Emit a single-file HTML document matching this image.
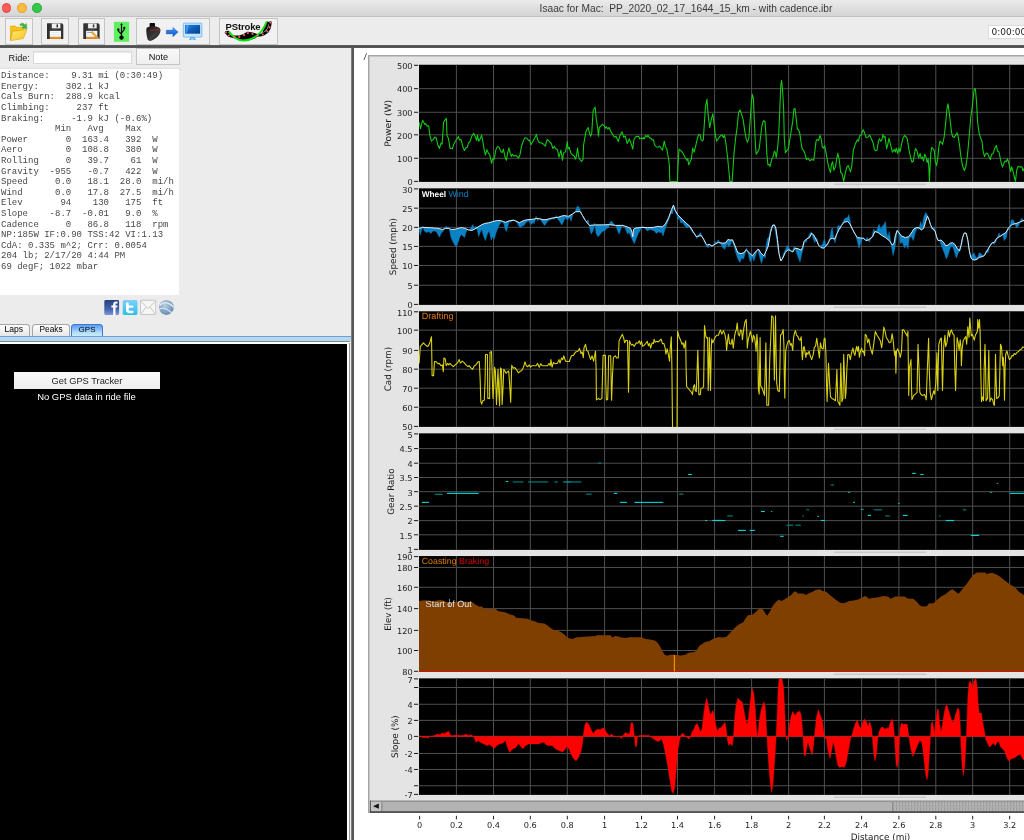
<!DOCTYPE html>
<html><head><meta charset="utf-8"><title>Isaac for Mac</title>
<style>
html,body{margin:0;padding:0;}
body{width:1024px;height:840px;overflow:hidden;position:relative;background:#ececec;font-family:"Liberation Sans",sans-serif;color:#111;}
.abs{position:absolute;}
#titlebar{left:0;top:0;width:1024px;height:16px;background:linear-gradient(#ebebeb,#d4d4d4);border-bottom:1px solid #c2c2c2;}
#title{left:536px;top:1.5px;width:300px;text-align:center;font-size:10.2px;line-height:13px;color:#3a3a3a;white-space:pre;}
.tl{width:9.4px;height:9.4px;border-radius:50%;top:3.4px;}
#toolbar{left:0;top:17px;width:1024px;height:28px;background:#ececec;}
.tb{background:#f1f1f1;border:1px solid #c4c4c4;box-sizing:border-box;top:18px;height:27px;}
#darkline{left:0;top:45px;width:1024px;height:3px;background:linear-gradient(#6a6a6a,#4c4c4c 40%,#5a5a5a);}
#left{left:0;top:48px;width:352px;height:792px;background:#ececec;}
#vdiv{left:351.3px;top:48px;width:3.3px;height:792px;background:linear-gradient(90deg,#9a9a9a,#565656 30%,#565656 70%,#9a9a9a);}
#right{left:354px;top:48px;width:670px;height:792px;background:#fff;}
#panel{left:368px;top:55.3px;width:656px;height:757.6px;background:#e4e4e4;box-sizing:border-box;box-shadow:inset 1px 1px 0 #a4a4a4, inset 2px 2px 0 #c6c6c6;}
.chart{position:absolute;left:0;top:0;text-rendering:geometricPrecision;}
.tk{font-family:"DejaVu Sans","Liberation Sans",sans-serif;font-size:8.2px;fill:#222;}
.at{font-family:"DejaVu Sans","Liberation Sans",sans-serif;font-size:8.9px;fill:#1a1a1a;}
.lg{font-family:"Liberation Sans",sans-serif;font-size:8.3px;font-weight:bold;}
#stats{left:0;top:69px;width:178.5px;height:226px;background:#fff;}
#stats pre{margin:0;position:absolute;left:1px;top:2.3px;font-family:"Liberation Mono",monospace;font-size:9px;line-height:10.59px;color:#484848;}
.lbl{font-size:9.2px;white-space:pre;}
</style></head>
<body>
<div id="wrap" style="position:absolute;left:0;top:0;width:1024px;height:840px;will-change:transform;">
<div id="titlebar" class="abs"></div>
<div class="abs tl" style="left:2px;background:#fc5b57;border:0.5px solid #e0443e;box-sizing:border-box"></div>
<div class="abs tl" style="left:17.2px;background:#fdbc40;border:0.5px solid #dea123;box-sizing:border-box"></div>
<div class="abs tl" style="left:32.3px;background:#34c84a;border:0.5px solid #1dad2b;box-sizing:border-box"></div>
<div id="title" class="abs">Isaac for Mac:  PP_2020_02_17_1644_15_km - with cadence.ibr</div>
<div id="toolbar" class="abs"></div>
<div class="abs tb" style="left:5.2px;width:27.4px;"></div>
<div class="abs tb" style="left:41.3px;width:27.4px;"></div>
<div class="abs tb" style="left:78.3px;width:26.5px;"></div>
<div class="abs tb" style="left:136.3px;width:73.5px;"></div>
<div class="abs tb" style="left:219.4px;width:58.3px;"></div>
<div class="abs" style="left:987.7px;top:24.8px;width:40px;height:14px;background:#fff;border:1px solid #dcdcdc;box-sizing:border-box;"></div>
<div class="abs" style="left:991.6px;top:26px;font-size:10px;line-height:12px;color:#222;white-space:pre;font-family:'DejaVu Sans','Liberation Sans',sans-serif;font-size:9px;">0:00:00</div>
<svg class="abs" style="left:0;top:16px" width="290" height="30" viewBox="0 16 290 30">
<defs>
<linearGradient id="fold" x1="0" y1="0" x2="1" y2="1"><stop offset="0" stop-color="#fdea80"/><stop offset="1" stop-color="#f8c414"/></linearGradient>
<linearGradient id="flp" x1="0" y1="0" x2="1" y2="0"><stop offset="0" stop-color="#2c2c2c"/><stop offset="0.5" stop-color="#4a4a4a"/><stop offset="1" stop-color="#2c2c2c"/></linearGradient>
<linearGradient id="scr" x1="0" y1="0" x2="1" y2="1"><stop offset="0" stop-color="#2a86e0"/><stop offset="0.5" stop-color="#0f5cb8"/><stop offset="1" stop-color="#0a3f8c"/></linearGradient>
<linearGradient id="arr" x1="0" y1="0" x2="0" y2="1"><stop offset="0" stop-color="#4a98f0"/><stop offset="1" stop-color="#0c50c8"/></linearGradient>
<linearGradient id="dev" x1="0" y1="0" x2="1" y2="1"><stop offset="0" stop-color="#1a1a1a"/><stop offset="0.6" stop-color="#3a3a3a"/><stop offset="1" stop-color="#141414"/></linearGradient>
</defs>
<!-- folder -->
<path d="M10.4 26.6q0-0.6 0.6-0.6h4.6l1 1.2h6.6q0.7 0 0.7 0.7v2.5l-11.6 0.9l-1.9 8.7z" fill="#f9c414" stroke="#d89808" stroke-width="0.5"/>
<path d="M12.8 31.3l14.1-1.7l-3.6 9l-12.7 2z" fill="url(#fold)" stroke="#dc9a0c" stroke-width="0.6"/>
<path d="M19.8 24.4c1.6-1.8 4-1.6 5 0.3l1.6-1.3l0.6 5.4l-5.3-0.9l1.5-1.3c-0.8-1.2-2-1.2-2.6-0.6z" fill="#3fb53f" stroke="#2a962a" stroke-width="0.3"/>
<!-- floppy 1 -->
<g id="fl">
<path d="M47.6 23.3h14.3l1.4 1.4v14.4h-16.3v-15.2q0-0.6 0.6-0.6z" fill="url(#flp)"/>
<rect x="51.8" y="23.5" width="8.6" height="4.8" fill="#f0f0f0"/>
<rect x="56.5" y="24.4" width="1.5" height="3" fill="#333"/>
<rect x="49.8" y="30.9" width="11.2" height="6" fill="#fafafa"/>
<path d="M50.6 32.7h9.6M50.6 34.8h9.6" stroke="#c8d4e8" stroke-width="0.5"/>
<rect x="49.8" y="36.9" width="11.2" height="2" fill="#f0921a"/>
</g>
<!-- floppy 2 -->
<g transform="translate(36.3 0)">
<path d="M47.6 23.3h14.3l1.4 1.4v14.4h-16.3v-15.2q0-0.6 0.6-0.6z" fill="url(#flp)"/>
<rect x="51.8" y="23.5" width="8.6" height="4.8" fill="#f0f0f0"/>
<rect x="56.5" y="24.4" width="1.5" height="3" fill="#333"/>
<rect x="49.8" y="30.9" width="11.2" height="6" fill="#fafafa"/>
<path d="M50.8 32.4h6" stroke="#5078c8" stroke-width="0.7"/><path d="M50.6 34.8h5" stroke="#c8d4e8" stroke-width="0.5"/>
<rect x="49.8" y="36.9" width="11.2" height="2" fill="#f0921a"/>
<path d="M54.6 32.4l1.3-1.1l6 6l-1.2 1.2z" fill="#f2a62a" stroke="#c07810" stroke-width="0.3"/>
<path d="M60.7 38.5l1.2-1.2l0.7 1.9z" fill="#f6d8b0"/>
</g>
<!-- usb -->
<rect x="113.9" y="21.8" width="15.2" height="20" fill="#5ef05e"/>
<g stroke="#000" fill="none" stroke-width="1.2">
<path d="M121.5 24.5V36"/>
<path d="M118.3 30.2c0 2.6 3.2 2.4 3.2 4.6"/>
<path d="M124.3 28.6c0 2.8-2.8 2.6-2.8 5"/>
</g>
<path d="M121.5 22.9l1.2 2.2h-2.4z" fill="#000"/>
<circle cx="121.5" cy="37.6" r="2.2" fill="#000"/>
<rect x="117.2" y="28.6" width="2.2" height="2" fill="#000"/>
<circle cx="124.3" cy="27.9" r="1.15" fill="#000"/>
<!-- device -->
<rect x="149.6" y="22.9" width="5.4" height="4.4" rx="0.8" fill="#0c0c0c"/>
<path d="M147.6 27.2c3-1.2 8-1.2 11.6 0.6c1.4 0.7 1.5 2.6 1 4.4c-0.8 3-4 6.6-9.2 8.6c-1.6 0.5-3.2-0.4-3.6-2c-0.9-3.6-1.3-7.6-1-10.2c0.1-0.8 0.5-1.1 1.2-1.4z" fill="url(#dev)"/>
<path d="M150 30.7q4.6-1.3 9.2-1.2" stroke="#c01828" stroke-width="0.9" fill="none"/>
<path d="M150.5 38.6l4.5-4.4" stroke="#555" stroke-width="0.4"/>
<!-- arrow -->
<path d="M166.2 30h6.6v-2.8l5.5 4.9l-5.5 5v-3h-6.6z" fill="url(#arr)" stroke="#2a6cd8" stroke-width="0.3"/>
<!-- monitor -->
<rect x="183.3" y="23.1" width="18.6" height="14" rx="0.7" fill="#c4e6ff" stroke="#58aaf0" stroke-width="0.7"/>
<rect x="185" y="24.9" width="15.1" height="8.8" fill="url(#scr)"/>
<path d="M186.3 25.2h2.6l-2 8.2h-1.6z" fill="#5aa8f0" opacity="0.7"/>
<path d="M190.6 37.1h3.6l1.8 2.8h-7z" fill="#58aaf0"/>
<path d="M191.2 38.6h2.4l0.6 1h-3.6z" fill="#d8f0ff"/>
<!-- pstroke -->
<path d="M226.1 32.4L228.8 35.5L234.3 36.9L239.3 36.9L244 35.1L247.9 33L252.5 33.8L257.7 35.5L262.8 34.6L267.5 31.6L269.7 27.3L270.4 22.6" fill="none" stroke="#000" stroke-width="2.6" stroke-linejoin="round" stroke-linecap="round"/>
<path d="M228.2 30.6L226 31.4L229 34.5L231 33.5z" fill="#000"/>
<path d="M236 37.5L239.3 36.9L244 35.1L247.9 33L252.5 33.8L257.7 35.5L256 38L250 40L243.3 40.8L238 39.8z" fill="#000"/>
<path d="M262 34L267 29L269.5 22L267 21.5L264 28z" fill="#000"/>
<path d="M228.800 31.600C233 37 238 40.600 243.300 40.600C252 40.600 262.500 34 266.700 21.500" fill="none" stroke="#0be20b" stroke-width="2"/>
<g fill="#ff5a68">
<circle cx="226.100" cy="32.400" r="1.000"/><circle cx="228.800" cy="35.500" r="1.050"/><circle cx="234.300" cy="36.900" r="1.100"/><circle cx="239.300" cy="36.900" r="1.100"/><circle cx="244.000" cy="35.100" r="1.100"/><circle cx="247.900" cy="33.000" r="1.100"/><circle cx="252.500" cy="33.800" r="1.100"/><circle cx="257.700" cy="35.500" r="1.100"/><circle cx="262.800" cy="34.600" r="1.100"/><circle cx="267.500" cy="31.600" r="1.100"/><circle cx="269.700" cy="27.300" r="1.100"/><circle cx="270.400" cy="22.600" r="1.100"/>
</g>

</svg>

<div class="abs" style="left:225.6px;top:20.6px;font-size:9.5px;line-height:11px;font-weight:bold;color:#111;white-space:pre;letter-spacing:-0.15px;">PStroke</div>

<div id="darkline" class="abs"></div>
<div id="left" class="abs"></div>
<div id="vdiv" class="abs"></div>
<div id="right" class="abs"></div>
<div id="panel" class="abs"></div>
<div class="abs lbl" style="left:8.6px;top:51.7px;line-height:12px;font-size:9.1px;">Ride:</div>
<div class="abs" style="left:32.5px;top:50.5px;width:99.5px;height:13px;background:#fff;border:1px solid #dadada;box-sizing:border-box;box-shadow:inset 0 1px 1px #e8e8e8;"></div>
<div class="abs" style="left:136.3px;top:48.4px;width:44.2px;height:16.6px;background:linear-gradient(#f8f8f8,#efefef);border:1px solid #c6c6c6;box-sizing:border-box;text-align:center;font-size:9.2px;line-height:16px;">Note</div>
<div class="abs" style="left:0;top:66.5px;width:181px;height:3px;background:linear-gradient(#ececec,#dcdcdc);"></div>
<div id="stats" class="abs"><pre>Distance:    9.31 mi (0:30:49)
Energy:     302.1 kJ
Cals Burn:  288.9 kcal
Climbing:     237 ft
Braking:     -1.9 kJ (-0.6%)
          Min   Avg    Max
Power       0  163.4   392  W
Aero        0  108.8   380  W
Rolling     0   39.7    61  W
Gravity  -955   -0.7   422  W
Speed     0.0   18.1  28.0  mi/h
Wind      0.0   17.8  27.5  mi/h
Elev       94    130   175  ft
Slope    -8.7  -0.01   9.0  %
Cadence     0   86.8   118  rpm
NP:185W IF:0.90 TSS:42 VI:1.13
CdA: 0.335 m^2; Crr: 0.0054
204 lb; 2/17/20 4:44 PM
69 degF; 1022 mbar</pre></div>
<!-- social icons -->
<svg class="abs" style="left:100px;top:296px" width="80" height="24" viewBox="0 0 80 24">
<defs>
<linearGradient id="fbg" x1="0" y1="0" x2="0" y2="1"><stop offset="0" stop-color="#27437f"/><stop offset="0.6" stop-color="#4562a8"/><stop offset="1" stop-color="#7a98e0"/></linearGradient>
<linearGradient id="twg" x1="0" y1="0" x2="0" y2="1"><stop offset="0" stop-color="#7fd0fb"/><stop offset="1" stop-color="#2bbfe6"/></linearGradient>
<radialGradient id="glg" cx="0.4" cy="0.35" r="0.7"><stop offset="0" stop-color="#b9cfe2"/><stop offset="1" stop-color="#5f88b0"/></radialGradient>
</defs>
<rect x="4.3" y="4.1" width="14.8" height="14.8" rx="1.3" fill="url(#fbg)"/>
<path d="M13.2 18.9V11.6H11.4V9.6H13.2V8.3C13.2 6.3 14.3 5.4 16 5.4C16.7 5.4 17.3 5.5 17.5 5.5V7.4H16.5C15.7 7.4 15.5 7.8 15.5 8.4V9.6H17.4L17.1 11.6H15.5V18.9Z" fill="#fff"/>
<rect x="22.7" y="4.1" width="14.8" height="14.8" rx="1.6" fill="url(#twg)"/>
<path d="M27.2 6.6c0.9 0 1.5 0.5 1.5 1.4V9.4H32.3c0.8 0 1.3 0.5 1.3 1.2s-0.5 1.2-1.3 1.2H28.7v1.6c0 1 0.5 1.4 1.5 1.4h2.1c0.8 0 1.3 0.5 1.3 1.2s-0.5 1.2-1.3 1.2H29.6c-2.3 0-3.6-1.2-3.6-3.5V8c0-0.9 0.5-1.4 1.2-1.4z" fill="#fff"/>
<rect x="40.5" y="4.3" width="15.2" height="14.2" rx="0.8" fill="#f6f6f6" stroke="#b4b4b4" stroke-width="0.7"/>
<path d="M40.8 5.2L48.1 12.6L55.4 5.2M40.8 18L46.3 11M55.4 18L49.9 11" fill="none" stroke="#b0b0b0" stroke-width="0.7"/>
<circle cx="66.4" cy="11.6" r="7.4" fill="url(#glg)"/>
<path d="M59.6 9.5C62 6.6 66 5.6 70.5 8.4C72 9.3 73 10.5 73.6 11.4" fill="none" stroke="#e6eef6" stroke-width="1.3"/>
<path d="M59.2 13.2C62.5 11.5 66.5 12.5 69.5 15.2C70.5 16 71.3 16.5 72.2 16.3" fill="none" stroke="#dbe7f2" stroke-width="1.1"/>
</svg>
<!-- tabs -->
<div class="abs" style="left:-4px;top:324.3px;width:34.2px;height:12.2px;background:linear-gradient(#fdfdfd,#f2f2f2 50%,#e6e6e6);border:1px solid #a6a6a6;border-bottom:none;border-radius:3.5px 3.5px 0 0;box-sizing:border-box;"></div>
<div class="abs" style="left:31.6px;top:324.3px;width:38.6px;height:12.2px;background:linear-gradient(#fdfdfd,#f2f2f2 50%,#e6e6e6);border:1px solid #a6a6a6;border-bottom:none;border-radius:3.5px 3.5px 0 0;box-sizing:border-box;"></div>
<div class="abs" style="left:70.8px;top:324.3px;width:31.8px;height:12.2px;background:linear-gradient(#5c9ff0,#8ec4f8 45%,#b5defc 70%,#c8ecff);border:1px solid #3d7ad6;border-bottom:none;border-radius:3.5px 3.5px 0 0;box-sizing:border-box;"></div>
<div class="abs lbl" style="left:4.4px;top:324.2px;font-size:8.6px;line-height:11px;color:#000;">Laps</div>
<div class="abs lbl" style="left:39.5px;top:324.2px;font-size:8.3px;line-height:11px;color:#000;">Peaks</div>
<div class="abs lbl" style="left:78.6px;top:324.2px;font-size:8px;line-height:11px;color:#000;">GPS</div>
<!-- blue strip -->
<div class="abs" style="left:0;top:336px;width:351.3px;height:5.2px;background:linear-gradient(#6c9fd2 0,#6c9fd2 18%,#bcd6f0 28%,#bcd6f0 68%,#a5dcfc 80%,#a5dcfc 100%);"></div>
<div class="abs" style="left:0;top:341.2px;width:350px;height:1px;background:#8a8a8a;"></div>
<div class="abs" style="left:0;top:342.2px;width:349.5px;height:498px;background:#fff;"></div>
<div class="abs" style="left:349.3px;top:343px;width:0.8px;height:497px;background:#9a9a9a;"></div>
<div class="abs" style="left:0;top:344.3px;width:346.8px;height:496px;background:#000;"></div>
<div class="abs" style="left:14.4px;top:372px;width:145.2px;height:17px;background:linear-gradient(#f9f9f9,#eeeeee);text-align:center;font-size:9.3px;line-height:19.4px;color:#222;">Get GPS Tracker</div>
<div class="abs lbl" style="left:0;top:390.6px;width:173px;text-align:center;color:#fff;font-size:9.45px;line-height:12px;">No GPS data in ride file</div>

<div class="abs" style="left:363.9px;top:51.6px;font-size:9.2px;line-height:10px;color:#2a2a2a;transform:skewX(-8deg);">/</div>
<svg class="chart" width="1024" height="840" viewBox="0 0 1024 840">
<defs>
<clipPath id="c0"><rect x="419.00" y="64.75" width="605.00" height="117.15"/></clipPath>
<clipPath id="c1"><rect x="419.00" y="188.35" width="605.00" height="116.55"/></clipPath>
<clipPath id="c2"><rect x="419.00" y="311.27" width="605.00" height="115.63"/></clipPath>
<clipPath id="c3"><rect x="419.00" y="433.35" width="605.00" height="116.55"/></clipPath>
<clipPath id="c4"><rect x="419.00" y="556.05" width="605.00" height="115.85"/></clipPath>
<clipPath id="c5"><rect x="419.00" y="678.35" width="605.00" height="116.55"/></clipPath>
</defs>
<rect x="419.00" y="64.75" width="605.00" height="117.15" fill="#000"/>
<rect x="419.00" y="188.35" width="605.00" height="116.55" fill="#000"/>
<rect x="419.00" y="311.27" width="605.00" height="115.63" fill="#000"/>
<rect x="419.00" y="433.35" width="605.00" height="116.55" fill="#000"/>
<rect x="419.00" y="556.05" width="605.00" height="115.85" fill="#000"/>
<rect x="419.00" y="678.35" width="605.00" height="116.55" fill="#000"/>
<path d="M419.0 88.66H1024M419.0 112.27H1024M419.0 134.82H1024M419.0 158.28H1024M456.40 64.75V181.90M493.50 64.75V181.90M530.30 64.75V181.90M567.30 64.75V181.90M604.60 64.75V181.90M641.50 64.75V181.90M677.50 64.75V181.90M714.60 64.75V181.90M751.60 64.75V181.90M788.60 64.75V181.90M824.40 64.75V181.90M861.60 64.75V181.90M898.90 64.75V181.90M935.80 64.75V181.90M972.70 64.75V181.90M1009.70 64.75V181.90" stroke="#4f4f4f" stroke-width="1" fill="none"/>
<path clip-path="url(#c0)" d="M419.1 122.2 L420.5 128.6 L422.6 120.3 L424.9 124.5 L425.7 123.7 L427.2 126.3 L428.7 125.7 L429.8 135.1 L431.5 141.2 L433.3 139.4 L434.5 137.4 L436.0 137.4 L437.9 145.0 L439.4 148.5 L441.2 142.7 L442.1 144.3 L443.6 122.2 L445.2 119.9 L446.4 118.4 L447.0 135.1 L448.5 138.9 L450.0 148.1 L452.3 148.8 L453.8 144.3 L455.8 140.5 L458.4 136.6 L459.5 140.0 L461.0 139.4 L463.0 147.3 L464.5 150.4 L466.0 147.6 L467.3 147.3 L468.6 142.4 L469.8 142.0 L471.7 136.3 L473.7 133.3 L475.2 136.6 L476.7 140.5 L477.5 135.1 L478.7 141.2 L480.2 138.9 L481.6 135.1 L482.8 141.2 L484.3 150.4 L485.4 154.9 L486.9 149.6 L488.4 153.4 L489.6 154.2 L491.6 163.3 L492.7 158.7 L494.2 159.2 L495.7 150.4 L497.3 146.6 L499.1 147.3 L501.1 151.9 L502.1 152.6 L503.4 149.1 L504.9 156.5 L506.4 160.3 L507.9 151.9 L509.0 147.8 L510.2 153.4 L511.3 156.5 L512.2 154.2 L514.0 156.1 L515.5 155.2 L517.1 156.5 L518.6 158.0 L520.1 154.2 L521.6 145.8 L523.5 140.5 L525.0 137.7 L527.0 138.2 L528.5 140.5 L529.6 140.2 L531.1 144.6 L532.3 142.4 L534.6 138.2 L536.4 134.4 L537.6 139.7 L539.2 142.4 L541.4 143.0 L543.7 144.3 L545.3 146.2 L547.2 139.4 L549.1 141.2 L551.3 143.5 L552.9 148.5 L554.4 146.2 L555.9 149.1 L557.4 149.6 L559.0 157.2 L560.9 150.1 L562.5 160.3 L563.5 153.1 L565.5 151.9 L567.3 141.5 L568.0 148.8 L569.3 147.3 L570.8 153.1 L572.6 154.9 L574.1 155.7 L575.4 159.2 L576.4 156.1 L577.5 148.1 L579.0 158.0 L581.5 161.3 L583.0 159.5 L583.6 145.0 L584.8 138.2 L586.0 131.3 L588.2 127.5 L589.4 132.8 L590.6 136.3 L591.7 133.6 L593.2 110.0 L595.2 107.2 L596.2 118.4 L597.8 129.0 L598.5 136.3 L599.3 127.5 L600.8 126.3 L602.3 124.2 L604.3 126.0 L605.4 128.3 L606.4 126.7 L607.7 129.0 L609.2 127.5 L610.7 131.3 L612.2 133.6 L614.1 137.0 L616.0 136.6 L618.3 141.5 L620.1 135.1 L622.1 131.8 L623.7 137.4 L625.2 135.9 L627.2 143.5 L629.3 138.9 L630.8 142.7 L632.8 149.1 L633.9 139.7 L635.4 137.0 L637.4 136.3 L638.9 136.6 L639.6 138.9 L641.2 137.9 L642.4 138.9 L643.5 137.4 L644.2 138.9 L645.7 135.4 L647.0 137.0 L648.0 135.4 L649.6 137.9 L651.1 138.2 L652.1 140.0 L653.4 139.7 L654.6 145.0 L656.4 147.0 L658.2 147.0 L659.8 146.2 L661.3 148.5 L662.5 150.1 L664.3 141.2 L665.5 147.0 L666.8 148.8 L667.8 154.9 L668.6 158.7 L669.4 165.6 L669.8 181.3 L671.6 181.6 L677.4 181.6 L678.0 165.6 L679.0 149.1 L680.8 150.7 L682.6 152.6 L684.6 156.5 L686.1 159.2 L686.9 160.3 L687.8 158.7 L688.7 164.8 L689.9 162.2 L691.4 158.7 L692.7 148.1 L694.2 152.2 L695.7 145.8 L697.5 138.2 L698.8 134.4 L700.3 135.1 L701.0 139.7 L702.4 140.9 L703.3 139.7 L704.4 122.9 L705.5 106.2 L707.0 99.3 L708.2 115.3 L709.7 127.8 L711.2 119.9 L712.8 113.8 L714.0 122.9 L715.1 133.6 L716.6 141.2 L719.6 136.6 L721.9 134.8 L723.4 137.4 L724.6 135.1 L726.0 144.3 L727.5 156.5 L729.0 171.7 L729.9 181.6 L732.1 181.6 L733.0 168.6 L734.0 153.4 L735.6 138.2 L737.1 127.5 L738.6 112.3 L740.1 110.0 L741.7 114.6 L743.2 119.9 L744.7 130.6 L746.2 138.9 L747.4 142.4 L748.8 138.2 L750.0 122.9 L751.3 103.1 L752.3 94.3 L753.4 98.6 L754.3 119.9 L755.4 144.3 L756.1 154.2 L757.7 151.9 L759.2 148.8 L760.4 138.2 L761.9 126.0 L763.4 120.7 L765.0 121.4 L766.0 135.1 L766.8 153.4 L767.9 164.8 L769.1 164.4 L770.1 166.4 L771.7 159.5 L772.9 157.2 L774.4 151.1 L775.6 153.4 L776.2 157.7 L777.5 148.8 L778.7 135.1 L779.7 112.3 L780.8 84.9 L781.6 80.6 L782.5 89.4 L783.6 107.7 L784.3 138.2 L785.4 152.6 L786.9 150.4 L788.4 148.8 L789.6 141.2 L791.2 130.6 L792.7 121.4 L793.9 109.2 L795.0 108.5 L796.0 116.8 L797.3 129.0 L798.5 129.8 L799.7 132.8 L801.1 142.7 L802.3 149.6 L803.4 150.1 L804.9 153.4 L806.4 159.5 L808.2 158.3 L809.8 160.7 L811.7 159.5 L813.7 160.3 L814.8 151.9 L816.0 141.2 L817.1 139.4 L818.6 140.5 L820.1 135.4 L821.3 139.7 L822.4 147.3 L823.5 148.1 L824.7 145.8 L826.2 153.4 L827.7 162.5 L829.3 169.4 L830.5 172.4 L831.5 164.4 L832.6 161.8 L833.8 170.2 L835.4 167.1 L836.6 159.5 L837.8 153.4 L839.2 159.5 L840.7 172.4 L842.2 174.0 L843.7 181.3 L845.3 173.2 L846.8 167.1 L848.3 165.6 L849.8 170.2 L850.6 171.7 L851.8 165.6 L853.3 150.4 L855.2 144.3 L857.4 139.7 L858.5 141.2 L859.7 135.9 L861.2 135.1 L863.1 129.8 L864.3 132.1 L866.1 137.7 L868.1 137.0 L869.6 135.1 L871.8 139.7 L873.3 143.5 L874.4 149.6 L875.6 150.7 L877.1 150.1 L878.4 141.2 L879.4 138.9 L880.9 141.2 L882.0 139.7 L882.9 134.4 L884.0 137.4 L885.1 136.6 L886.6 148.8 L887.8 144.3 L889.0 138.2 L890.5 144.3 L892.4 152.2 L894.2 149.6 L895.4 151.9 L896.2 148.1 L897.7 153.4 L898.9 148.1 L900.0 151.9 L901.5 144.3 L903.0 138.2 L904.6 135.4 L906.1 137.0 L907.3 138.9 L908.8 148.8 L910.7 158.0 L911.9 162.2 L913.4 161.0 L914.5 153.4 L915.5 148.5 L917.1 151.1 L918.6 158.0 L920.1 153.4 L921.3 158.7 L922.5 157.2 L923.6 161.0 L924.7 154.2 L925.9 156.5 L927.1 162.5 L928.2 158.7 L928.9 168.6 L929.4 181.6 L930.0 168.6 L930.8 153.4 L931.7 147.3 L933.2 149.1 L934.3 150.4 L935.3 161.0 L936.6 165.6 L937.8 158.0 L938.8 147.3 L939.9 141.2 L941.4 142.7 L942.6 144.3 L944.2 136.6 L945.7 122.9 L946.9 109.2 L948.0 103.9 L949.0 110.8 L950.3 121.4 L951.5 132.1 L952.6 136.6 L954.1 137.4 L955.6 135.1 L957.1 132.8 L958.2 136.6 L959.4 144.3 L960.9 156.5 L962.5 165.6 L964.3 170.5 L965.8 167.1 L967.3 156.5 L968.5 144.3 L969.8 129.0 L970.8 116.8 L972.4 106.2 L973.4 95.5 L974.3 88.7 L975.4 88.7 L976.5 101.6 L977.7 122.9 L979.2 133.6 L980.7 138.2 L982.0 141.2 L983.0 150.4 L984.5 156.5 L986.1 153.4 L987.6 153.4 L989.1 157.2 L990.3 159.5 L991.7 154.2 L993.2 153.4 L994.8 148.1 L996.4 145.5 L997.5 151.1 L999.0 151.9 L1000.2 158.0 L1001.3 163.3 L1002.5 167.1 L1003.9 163.3 L1005.1 161.0 L1006.3 161.8 L1007.4 158.7 L1008.5 161.8 L1009.7 167.1 L1010.7 171.4 L1011.7 166.8 L1012.7 170.2 L1013.9 175.5 L1015.5 181.3 L1016.5 171.7 L1017.6 167.1 L1018.8 166.4 L1020.3 167.1 L1021.9 166.8 L1022.8 170.9 L1024.0 168.6" fill="none" stroke="#14c814" stroke-width="1.1" stroke-linejoin="round"/>
<path d="M419.0 208.16H1024M419.0 227.35H1024M419.0 246.39H1024M419.0 265.44H1024M419.0 285.24H1024M456.40 188.35V304.90M493.50 188.35V304.90M530.30 188.35V304.90M567.30 188.35V304.90M604.60 188.35V304.90M641.50 188.35V304.90M677.50 188.35V304.90M714.60 188.35V304.90M751.60 188.35V304.90M788.60 188.35V304.90M824.40 188.35V304.90M861.60 188.35V304.90M898.90 188.35V304.90M935.80 188.35V304.90M972.70 188.35V304.90M1009.70 188.35V304.90" stroke="#4f4f4f" stroke-width="1" fill="none"/>
<path clip-path="url(#c1)" d="M419.1 228.4 L422.6 227.4 L430.2 227.7 L437.9 228.4 L442.4 229.5 L445.5 228.4 L448.5 228.4 L451.6 229.5 L455.4 229.2 L459.2 228.0 L462.2 227.7 L465.3 228.4 L468.3 229.9 L472.1 230.4 L475.9 228.4 L479.0 226.4 L482.0 224.6 L485.1 223.4 L488.9 222.8 L492.7 221.6 L497.3 220.5 L500.3 220.5 L503.4 221.6 L505.6 222.3 L507.9 221.3 L510.2 220.5 L513.3 220.3 L515.5 220.8 L517.8 221.9 L519.4 222.8 L521.6 221.6 L524.7 220.3 L527.7 219.7 L532.3 219.3 L536.9 218.5 L539.9 218.8 L543.0 219.7 L546.0 219.7 L549.1 218.8 L553.6 217.8 L558.2 217.3 L561.2 216.2 L564.3 215.5 L567.3 216.2 L568.8 216.2 L572.6 213.9 L575.7 211.7 L580.2 211.7 L582.5 215.5 L585.6 220.8 L589.4 225.4 L595.5 224.9 L603.1 224.9 L609.2 224.6 L615.3 225.4 L621.4 225.4 L625.9 226.4 L630.5 228.4 L632.0 232.2 L632.8 236.8 L633.6 229.2 L635.8 228.0 L641.2 227.4 L647.3 227.7 L653.4 227.4 L657.9 226.4 L662.5 226.9 L665.5 223.8 L668.6 217.8 L671.6 209.4 L673.5 205.1 L675.0 210.1 L677.7 214.7 L682.3 219.3 L686.9 223.8 L689.9 226.4 L693.0 231.5 L696.3 236.5 L699.1 236.0 L701.3 235.6 L703.6 239.1 L705.9 243.7 L707.4 245.2 L709.0 244.1 L712.0 246.2 L715.1 244.1 L717.3 242.9 L718.8 242.6 L722.6 243.2 L725.7 242.9 L727.9 239.5 L730.2 240.1 L732.5 239.8 L734.8 245.2 L737.9 252.8 L740.9 253.6 L743.9 252.8 L746.2 249.7 L749.3 252.8 L752.3 255.8 L755.4 252.0 L758.4 249.0 L760.7 252.8 L763.8 255.8 L766.0 251.3 L768.3 245.9 L770.6 232.2 L772.6 225.4 L774.4 224.9 L775.9 228.4 L777.5 239.8 L779.0 253.6 L780.8 260.9 L782.8 258.1 L785.1 252.8 L788.1 249.7 L790.4 250.5 L792.7 252.0 L795.0 248.2 L798.0 248.7 L801.1 250.2 L802.6 247.5 L804.1 241.4 L806.4 239.1 L809.5 237.6 L811.7 233.4 L814.0 235.3 L816.3 239.8 L818.6 245.2 L820.9 247.5 L823.2 248.2 L825.4 246.7 L827.7 243.7 L830.0 239.1 L832.3 238.3 L834.6 239.1 L836.9 233.8 L839.2 229.2 L841.4 225.4 L844.5 222.0 L847.5 221.6 L849.8 223.8 L852.1 228.4 L854.4 233.0 L857.4 237.6 L860.5 238.0 L863.5 238.3 L865.8 240.6 L868.1 240.1 L872.6 236.8 L874.9 231.5 L877.9 232.5 L881.7 235.3 L885.5 237.6 L889.3 240.6 L892.4 245.2 L894.2 242.9 L895.4 235.3 L897.2 230.4 L899.2 233.0 L901.5 236.0 L905.3 237.6 L908.4 236.8 L911.4 233.0 L913.7 229.2 L916.8 227.4 L919.0 227.7 L921.3 229.9 L923.6 228.4 L925.6 221.6 L927.4 216.2 L928.9 219.3 L930.5 224.6 L932.7 229.2 L935.0 230.7 L936.6 236.8 L938.1 240.6 L941.1 240.1 L943.4 242.1 L945.7 245.9 L948.0 245.2 L950.3 243.2 L952.6 242.6 L954.8 244.4 L957.1 248.2 L959.4 250.8 L960.9 245.9 L962.5 237.6 L964.3 233.0 L966.3 233.4 L967.8 239.8 L969.3 250.5 L970.8 257.4 L972.4 259.6 L974.6 260.0 L976.9 259.3 L979.2 257.4 L982.3 256.6 L984.5 255.4 L986.8 251.3 L989.9 245.9 L992.2 242.9 L994.4 242.1 L996.7 238.3 L999.8 236.5 L1002.8 234.5 L1005.9 232.5 L1008.2 228.4 L1010.4 225.8 L1012.7 224.3 L1015.0 223.8 L1018.1 222.8 L1021.1 221.6 L1024.0 220.3 L1024.0 221.6 L1021.9 218.2 L1020.3 220.8 L1018.5 225.8 L1016.5 228.0 L1015.0 223.8 L1013.0 219.7 L1011.2 220.3 L1009.7 229.9 L1007.9 229.2 L1006.3 237.6 L1004.3 240.6 L1002.4 233.8 L1000.5 236.8 L999.0 233.0 L997.5 237.6 L996.0 241.4 L994.1 244.4 L992.2 242.1 L989.9 245.2 L988.0 252.8 L986.1 250.5 L983.8 256.3 L981.5 254.3 L979.2 252.8 L977.4 258.1 L975.4 256.6 L973.9 252.8 L971.9 255.4 L970.4 255.8 L968.9 249.0 L967.3 237.6 L965.5 232.2 L963.7 233.8 L961.7 244.4 L960.2 250.5 L958.2 252.8 L956.4 258.1 L954.5 252.0 L952.6 245.9 L950.3 247.5 L948.4 254.3 L946.5 258.9 L944.2 252.8 L941.9 246.7 L939.6 240.6 L937.3 239.8 L935.8 235.3 L934.3 226.9 L932.0 229.2 L930.5 225.4 L928.6 217.8 L927.1 214.7 L925.6 212.4 L923.6 217.8 L922.1 226.9 L920.6 221.6 L919.0 229.2 L916.8 228.4 L914.9 233.8 L913.4 240.6 L911.4 236.8 L909.4 237.6 L907.9 248.7 L906.1 244.4 L904.6 248.2 L902.3 242.1 L900.3 243.7 L899.2 235.3 L897.7 229.9 L896.2 238.3 L894.7 249.0 L893.1 255.4 L892.1 249.7 L890.5 240.6 L889.3 231.5 L887.8 237.6 L886.6 232.2 L885.5 221.6 L884.0 224.6 L882.5 226.1 L880.9 229.2 L879.0 224.3 L877.1 229.2 L875.6 232.2 L873.8 229.2 L871.8 236.8 L869.2 242.1 L867.3 237.6 L865.5 240.1 L863.5 237.6 L862.0 239.8 L860.5 243.7 L859.0 248.2 L857.4 241.4 L855.9 236.0 L853.6 230.7 L851.8 229.2 L850.3 221.6 L848.8 214.7 L847.5 217.8 L846.0 217.8 L844.2 219.3 L842.2 223.8 L840.7 229.2 L839.2 225.4 L837.6 226.1 L836.6 236.8 L835.0 242.9 L833.5 236.8 L832.3 227.7 L831.1 230.7 L829.6 239.8 L827.7 245.2 L825.9 244.4 L824.4 239.1 L822.9 243.7 L820.9 245.9 L818.6 245.2 L816.8 238.3 L814.8 242.6 L813.3 239.1 L811.7 232.2 L810.2 233.0 L807.9 237.6 L806.1 242.6 L804.6 240.6 L803.1 249.0 L801.5 255.1 L800.0 261.9 L798.5 258.1 L796.5 252.8 L794.2 245.9 L793.5 249.0 L791.2 252.0 L789.3 248.2 L787.4 245.2 L785.4 249.7 L783.6 253.6 L781.3 260.4 L779.7 256.6 L778.2 250.5 L776.7 239.8 L775.2 230.7 L773.7 224.6 L772.1 225.4 L770.6 229.2 L769.1 236.8 L767.6 238.3 L766.0 245.9 L765.3 258.1 L763.4 256.3 L761.5 263.5 L759.5 256.6 L757.7 248.7 L755.8 255.1 L753.8 260.9 L752.3 256.6 L750.3 261.9 L748.5 255.1 L746.7 248.2 L745.5 252.0 L743.6 258.9 L741.7 258.1 L739.7 262.4 L737.5 258.1 L735.6 252.0 L734.0 245.9 L732.1 240.6 L730.2 245.2 L728.7 246.7 L726.9 243.7 L724.9 249.3 L722.6 247.5 L720.3 242.9 L718.0 239.8 L716.6 242.9 L715.1 241.4 L713.5 245.2 L711.6 246.7 L709.7 244.7 L708.2 247.8 L705.9 245.2 L703.9 240.6 L702.1 236.8 L700.6 232.5 L698.8 234.5 L696.8 238.6 L694.5 233.4 L692.7 232.5 L691.1 229.9 L689.2 226.9 L686.9 227.7 L684.6 225.8 L682.6 222.3 L680.8 223.1 L679.3 217.8 L678.0 219.7 L677.0 215.5 L675.4 211.7 L673.9 206.3 L672.4 213.9 L670.9 213.2 L668.6 220.0 L666.8 224.6 L664.8 229.9 L663.0 236.0 L661.3 231.5 L660.2 233.0 L658.7 231.5 L656.4 233.4 L654.1 230.7 L651.8 229.9 L649.6 229.5 L647.3 231.0 L645.0 228.4 L642.7 226.1 L640.4 229.9 L638.1 233.8 L636.3 238.3 L634.3 243.7 L632.0 239.1 L630.5 235.3 L629.0 232.2 L627.5 234.1 L625.9 229.9 L624.4 226.1 L622.1 224.6 L620.6 229.9 L619.1 234.1 L617.6 230.7 L616.0 226.1 L613.8 224.3 L611.9 221.3 L609.9 222.3 L608.9 226.9 L606.9 228.4 L604.6 230.7 L602.3 231.5 L600.0 234.5 L598.2 236.8 L596.2 233.8 L594.7 223.1 L593.2 230.7 L591.2 234.1 L589.4 226.9 L588.2 220.0 L586.3 221.6 L584.5 219.3 L582.5 216.2 L581.0 211.7 L579.0 207.1 L577.2 206.3 L574.9 212.4 L572.6 214.7 L571.1 221.3 L569.6 217.0 L568.0 219.7 L566.6 219.3 L565.1 217.8 L563.5 221.6 L562.0 224.9 L559.7 221.6 L557.9 219.3 L556.4 215.5 L554.4 219.3 L552.1 218.8 L549.8 219.7 L547.5 221.3 L546.0 223.8 L544.5 225.4 L542.2 222.3 L540.7 220.0 L539.2 217.8 L537.6 220.8 L536.1 216.2 L534.1 223.8 L533.1 222.3 L531.5 224.6 L530.0 223.1 L528.5 220.8 L526.2 222.3 L524.4 224.9 L522.4 226.1 L520.4 227.4 L518.6 226.1 L517.4 223.1 L515.5 221.6 L513.3 219.3 L511.0 222.3 L509.1 221.6 L507.9 226.1 L506.4 231.5 L505.2 229.2 L504.1 224.6 L502.6 221.6 L500.3 223.1 L498.0 227.7 L495.7 233.8 L494.2 239.1 L492.7 236.8 L491.2 240.1 L489.3 230.7 L487.4 233.8 L485.4 240.6 L483.6 236.0 L481.7 229.2 L480.2 232.2 L478.7 236.5 L477.5 230.7 L475.9 226.1 L474.4 229.2 L472.9 224.6 L470.6 228.4 L469.1 229.9 L467.6 229.5 L466.0 232.2 L464.5 237.6 L463.0 236.0 L461.5 234.5 L459.9 236.8 L458.4 241.4 L456.4 246.7 L454.9 245.2 L453.1 242.1 L450.8 236.8 L449.7 230.7 L448.8 226.9 L447.8 227.7 L446.2 226.1 L443.9 229.5 L443.2 231.5 L441.2 233.0 L439.4 237.3 L437.9 234.5 L436.3 231.5 L433.3 230.7 L431.0 233.4 L428.7 231.5 L426.4 232.5 L424.1 230.7 L422.6 226.1 L421.9 229.2 L420.3 235.0 L419.1 228.4Z" fill="#0b82c4" stroke="#0b82c4" stroke-width="0.5" fill-rule="nonzero"/>
<path clip-path="url(#c1)" d="M419.1 228.4 L422.6 227.4 L430.2 227.7 L437.9 228.4 L442.4 229.5 L445.5 228.4 L448.5 228.4 L451.6 229.5 L455.4 229.2 L459.2 228.0 L462.2 227.7 L465.3 228.4 L468.3 229.9 L472.1 230.4 L475.9 228.4 L479.0 226.4 L482.0 224.6 L485.1 223.4 L488.9 222.8 L492.7 221.6 L497.3 220.5 L500.3 220.5 L503.4 221.6 L505.6 222.3 L507.9 221.3 L510.2 220.5 L513.3 220.3 L515.5 220.8 L517.8 221.9 L519.4 222.8 L521.6 221.6 L524.7 220.3 L527.7 219.7 L532.3 219.3 L536.9 218.5 L539.9 218.8 L543.0 219.7 L546.0 219.7 L549.1 218.8 L553.6 217.8 L558.2 217.3 L561.2 216.2 L564.3 215.5 L567.3 216.2 L568.8 216.2 L572.6 213.9 L575.7 211.7 L580.2 211.7 L582.5 215.5 L585.6 220.8 L589.4 225.4 L595.5 224.9 L603.1 224.9 L609.2 224.6 L615.3 225.4 L621.4 225.4 L625.9 226.4 L630.5 228.4 L632.0 232.2 L632.8 236.8 L633.6 229.2 L635.8 228.0 L641.2 227.4 L647.3 227.7 L653.4 227.4 L657.9 226.4 L662.5 226.9 L665.5 223.8 L668.6 217.8 L671.6 209.4 L673.5 205.1 L675.0 210.1 L677.7 214.7 L682.3 219.3 L686.9 223.8 L689.9 226.4 L693.0 231.5 L696.3 236.5 L699.1 236.0 L701.3 235.6 L703.6 239.1 L705.9 243.7 L707.4 245.2 L709.0 244.1 L712.0 246.2 L715.1 244.1 L717.3 242.9 L718.8 242.6 L722.6 243.2 L725.7 242.9 L727.9 239.5 L730.2 240.1 L732.5 239.8 L734.8 245.2 L737.9 252.8 L740.9 253.6 L743.9 252.8 L746.2 249.7 L749.3 252.8 L752.3 255.8 L755.4 252.0 L758.4 249.0 L760.7 252.8 L763.8 255.8 L766.0 251.3 L768.3 245.9 L770.6 232.2 L772.6 225.4 L774.4 224.9 L775.9 228.4 L777.5 239.8 L779.0 253.6 L780.8 260.9 L782.8 258.1 L785.1 252.8 L788.1 249.7 L790.4 250.5 L792.7 252.0 L795.0 248.2 L798.0 248.7 L801.1 250.2 L802.6 247.5 L804.1 241.4 L806.4 239.1 L809.5 237.6 L811.7 233.4 L814.0 235.3 L816.3 239.8 L818.6 245.2 L820.9 247.5 L823.2 248.2 L825.4 246.7 L827.7 243.7 L830.0 239.1 L832.3 238.3 L834.6 239.1 L836.9 233.8 L839.2 229.2 L841.4 225.4 L844.5 222.0 L847.5 221.6 L849.8 223.8 L852.1 228.4 L854.4 233.0 L857.4 237.6 L860.5 238.0 L863.5 238.3 L865.8 240.6 L868.1 240.1 L872.6 236.8 L874.9 231.5 L877.9 232.5 L881.7 235.3 L885.5 237.6 L889.3 240.6 L892.4 245.2 L894.2 242.9 L895.4 235.3 L897.2 230.4 L899.2 233.0 L901.5 236.0 L905.3 237.6 L908.4 236.8 L911.4 233.0 L913.7 229.2 L916.8 227.4 L919.0 227.7 L921.3 229.9 L923.6 228.4 L925.6 221.6 L927.4 216.2 L928.9 219.3 L930.5 224.6 L932.7 229.2 L935.0 230.7 L936.6 236.8 L938.1 240.6 L941.1 240.1 L943.4 242.1 L945.7 245.9 L948.0 245.2 L950.3 243.2 L952.6 242.6 L954.8 244.4 L957.1 248.2 L959.4 250.8 L960.9 245.9 L962.5 237.6 L964.3 233.0 L966.3 233.4 L967.8 239.8 L969.3 250.5 L970.8 257.4 L972.4 259.6 L974.6 260.0 L976.9 259.3 L979.2 257.4 L982.3 256.6 L984.5 255.4 L986.8 251.3 L989.9 245.9 L992.2 242.9 L994.4 242.1 L996.7 238.3 L999.8 236.5 L1002.8 234.5 L1005.9 232.5 L1008.2 228.4 L1010.4 225.8 L1012.7 224.3 L1015.0 223.8 L1018.1 222.8 L1021.1 221.6 L1024.0 220.3" fill="none" stroke="#ececec" stroke-width="0.95" stroke-linejoin="round"/>
<path d="M419.0 330.16H1024M419.0 350.42H1024M419.0 369.16H1024M419.0 388.20H1024M419.0 407.24H1024M456.40 311.27V426.90M493.50 311.27V426.90M530.30 311.27V426.90M567.30 311.27V426.90M604.60 311.27V426.90M641.50 311.27V426.90M677.50 311.27V426.90M714.60 311.27V426.90M751.60 311.27V426.90M788.60 311.27V426.90M824.40 311.27V426.90M861.60 311.27V426.90M898.90 311.27V426.90M935.80 311.27V426.90M972.70 311.27V426.90M1009.70 311.27V426.90" stroke="#4f4f4f" stroke-width="1" fill="none"/>
<path clip-path="url(#c2)" d="M419.1 363.4 L420.3 346.6 L423.4 342.8 L426.4 345.8 L427.9 346.6 L429.5 343.6 L431.5 336.7 L432.1 375.6 L433.6 375.6 L434.5 361.5 L436.3 361.8 L437.9 363.7 L439.4 363.4 L440.9 365.7 L442.4 364.9 L443.3 371.7 L443.9 358.0 L445.2 358.8 L446.2 365.7 L447.8 363.4 L448.8 364.9 L450.0 363.4 L451.6 365.2 L453.4 366.7 L455.4 364.6 L457.4 363.1 L459.2 359.6 L460.4 363.1 L462.2 361.1 L464.1 362.6 L466.0 364.9 L468.0 366.7 L469.1 365.7 L470.6 367.6 L472.6 369.2 L474.4 365.7 L475.9 364.9 L477.8 362.1 L479.3 361.5 L480.2 380.1 L480.8 401.5 L481.7 404.2 L482.8 400.7 L484.3 400.2 L485.1 380.1 L485.5 354.5 L487.4 354.5 L487.8 398.4 L489.6 398.4 L490.0 352.2 L491.5 351.6 L492.4 380.1 L493.0 398.4 L493.9 383.2 L494.5 367.2 L495.4 371.0 L496.5 404.5 L497.3 386.2 L498.0 369.2 L498.8 392.3 L499.6 405.7 L500.0 383.2 L500.6 367.9 L501.5 369.5 L502.1 404.5 L503.1 386.2 L503.8 369.2 L504.9 371.0 L506.1 373.3 L507.6 371.7 L508.7 371.0 L509.8 386.2 L510.7 402.2 L511.3 380.1 L511.7 365.3 L513.3 368.2 L514.8 367.6 L516.8 370.2 L518.3 372.8 L520.1 371.3 L521.6 370.7 L523.5 367.2 L525.0 361.8 L526.2 365.7 L527.7 366.7 L529.3 364.9 L530.5 367.2 L532.0 365.7 L533.8 365.7 L536.1 365.7 L537.6 363.4 L539.2 367.2 L540.7 363.7 L542.2 365.7 L544.5 365.7 L547.5 365.7 L549.1 363.4 L550.3 365.7 L550.9 359.6 L552.1 367.2 L553.3 362.6 L555.2 363.7 L557.4 363.4 L559.0 359.6 L560.0 363.1 L561.6 358.0 L562.8 359.6 L563.7 355.8 L565.5 361.1 L567.3 361.5 L569.3 361.5 L571.4 355.8 L573.4 355.4 L575.7 351.9 L577.9 351.2 L579.5 348.4 L581.0 353.5 L582.1 351.9 L583.3 357.6 L584.0 347.8 L585.6 344.3 L586.6 350.4 L587.9 351.2 L589.4 355.8 L590.6 359.6 L592.1 355.8 L593.6 361.1 L595.5 351.2 L596.1 367.9 L596.4 399.9 L598.5 398.4 L600.0 399.6 L601.9 398.4 L602.5 375.6 L603.1 355.4 L605.4 355.4 L605.8 383.2 L606.4 399.9 L607.7 399.2 L608.3 375.6 L608.6 355.8 L610.7 355.8 L611.2 383.2 L611.6 400.2 L612.5 375.6 L613.4 357.6 L615.3 355.8 L616.8 358.0 L618.3 358.0 L619.1 340.8 L620.6 337.5 L622.4 334.4 L623.7 338.2 L624.7 342.8 L625.9 340.2 L627.5 340.5 L628.1 367.9 L628.5 392.3 L629.0 367.9 L629.4 340.8 L631.3 345.1 L632.8 344.3 L634.3 346.3 L636.3 342.8 L637.8 343.3 L639.3 340.8 L640.4 344.3 L641.5 341.3 L642.7 346.3 L644.2 345.1 L645.7 343.6 L647.3 341.3 L648.5 345.8 L649.6 343.6 L650.6 348.1 L652.1 342.8 L653.4 343.6 L654.1 339.3 L655.2 342.3 L656.4 341.3 L657.9 342.0 L659.5 340.8 L661.0 339.0 L662.5 343.6 L664.0 343.6 L665.2 348.1 L665.9 354.2 L667.1 348.9 L668.3 354.2 L669.5 361.1 L670.4 346.6 L671.3 336.7 L671.9 367.9 L672.6 435.0 L677.0 435.0 L677.3 367.9 L677.6 331.1 L679.0 336.7 L680.5 339.8 L682.0 344.3 L683.1 342.8 L684.1 348.1 L685.7 340.8 L686.1 367.9 L686.6 386.5 L688.4 388.5 L689.9 390.5 L691.1 391.6 L692.4 394.6 L693.7 386.2 L694.5 384.7 L695.3 390.5 L696.3 391.6 L697.2 367.9 L697.8 350.4 L698.3 367.9 L698.8 394.6 L700.3 394.6 L700.9 388.5 L702.9 387.7 L703.6 386.2 L704.1 352.7 L704.5 325.6 L705.9 336.7 L707.0 338.2 L707.6 337.5 L708.2 390.5 L708.8 367.9 L709.4 337.5 L710.0 367.9 L710.5 390.5 L711.2 352.7 L711.7 339.0 L712.8 342.8 L714.0 339.8 L715.5 336.7 L717.0 335.2 L718.4 335.2 L720.3 329.9 L721.9 334.1 L723.4 330.6 L724.9 334.4 L726.0 340.5 L726.6 350.4 L727.5 341.3 L728.4 334.4 L729.5 343.6 L731.0 344.3 L732.1 339.0 L733.3 348.1 L734.5 336.7 L735.6 331.4 L736.3 329.9 L737.2 323.0 L738.2 333.7 L739.4 335.9 L740.6 329.9 L741.7 330.6 L742.4 339.8 L743.6 329.9 L744.9 322.2 L746.2 319.5 L747.0 337.5 L747.3 348.1 L748.2 339.8 L749.3 335.9 L750.3 331.4 L751.6 336.7 L752.5 342.0 L753.4 335.2 L754.6 337.5 L755.5 345.1 L756.1 351.2 L756.9 334.4 L757.7 345.1 L758.4 389.3 L759.2 394.1 L759.6 367.9 L760.1 337.5 L760.7 386.2 L761.9 387.7 L763.0 390.5 L764.5 395.4 L765.3 367.9 L765.9 342.8 L766.5 383.2 L766.8 405.3 L768.6 405.3 L769.2 383.2 L769.8 357.3 L770.8 337.5 L771.7 315.7 L773.2 317.7 L773.8 352.7 L774.4 380.1 L774.9 345.1 L775.5 315.7 L776.1 352.7 L776.7 383.2 L777.8 390.5 L779.3 391.6 L779.9 367.9 L780.5 335.2 L782.0 333.7 L783.2 329.5 L783.9 345.1 L784.3 375.6 L784.8 398.1 L785.2 375.6 L785.7 351.2 L786.9 345.1 L788.1 341.3 L789.3 340.5 L790.4 345.1 L791.5 343.6 L792.7 350.4 L793.6 337.5 L794.5 332.9 L795.4 330.6 L796.5 335.2 L798.0 336.7 L799.1 339.8 L800.3 340.2 L801.2 336.7 L801.8 351.2 L802.4 359.6 L803.4 348.1 L804.1 346.6 L804.9 351.2 L805.8 357.3 L806.7 352.7 L807.9 354.2 L809.1 351.2 L810.2 355.8 L811.7 359.6 L813.3 354.2 L814.3 347.4 L815.5 346.3 L816.8 338.2 L818.0 347.4 L819.4 358.0 L820.4 342.8 L821.6 348.1 L823.2 348.9 L824.1 339.0 L825.0 338.2 L825.9 352.7 L826.5 383.2 L827.1 401.5 L827.7 383.2 L828.5 363.4 L829.6 383.2 L830.5 396.9 L832.0 398.4 L833.5 399.2 L835.4 400.7 L836.3 383.2 L836.9 369.5 L837.3 383.2 L837.8 401.5 L838.7 402.7 L839.9 405.3 L840.4 383.2 L840.8 363.4 L841.4 383.2 L841.9 401.5 L843.0 398.4 L843.7 354.2 L844.5 375.6 L845.3 398.4 L846.0 392.3 L846.9 367.9 L847.8 354.5 L849.1 354.5 L850.3 359.6 L851.3 354.2 L852.9 348.1 L853.9 352.7 L854.9 355.4 L855.9 349.7 L856.7 346.3 L857.6 351.2 L858.5 346.6 L859.4 357.3 L860.5 351.2 L861.6 348.1 L862.5 351.9 L863.5 351.2 L864.6 355.8 L865.2 334.4 L866.6 335.9 L867.6 342.8 L868.9 339.0 L870.1 346.6 L871.4 351.2 L872.3 354.2 L873.8 343.6 L875.3 331.4 L877.1 335.2 L879.0 338.2 L880.5 341.3 L881.7 347.8 L882.9 337.5 L883.8 327.1 L885.1 331.4 L886.3 337.5 L887.8 339.8 L889.3 342.8 L890.9 342.0 L892.1 333.7 L893.1 339.8 L894.2 351.2 L894.8 355.8 L895.4 351.2 L895.9 373.3 L896.5 351.2 L897.7 348.9 L899.2 352.7 L900.3 357.3 L901.5 351.2 L902.4 329.9 L903.8 329.9 L904.9 332.1 L906.4 334.4 L907.3 336.2 L907.9 331.4 L908.4 367.9 L908.7 395.4 L909.4 367.9 L911.0 359.6 L911.4 383.2 L911.9 399.6 L913.7 395.4 L915.5 393.8 L917.1 392.3 L917.5 367.9 L918.0 344.3 L919.0 367.9 L919.8 392.3 L921.0 394.6 L922.5 395.4 L924.4 394.6 L925.6 396.9 L926.2 399.9 L927.4 367.9 L928.6 338.2 L929.2 367.9 L930.2 392.3 L931.4 399.6 L932.7 394.6 L933.8 390.8 L934.7 394.1 L935.8 383.2 L936.9 352.7 L937.3 375.6 L937.8 390.5 L938.2 367.9 L938.8 344.3 L940.4 339.0 L941.4 338.2 L942.0 367.9 L942.5 390.5 L943.1 367.9 L943.7 346.6 L944.9 335.2 L945.7 346.6 L946.9 342.8 L948.4 330.6 L949.5 336.7 L950.6 331.4 L951.5 329.9 L952.6 333.7 L954.1 335.2 L954.8 367.9 L955.6 390.5 L956.4 360.3 L957.1 337.5 L958.2 342.8 L959.1 350.4 L960.2 339.8 L960.9 346.6 L961.4 365.7 L962.1 349.7 L963.2 340.5 L964.7 338.2 L965.8 336.7 L966.7 344.3 L967.8 326.8 L968.5 332.9 L969.0 337.5 L969.8 318.0 L970.4 325.3 L971.3 335.9 L972.4 334.4 L973.4 337.5 L974.3 340.2 L975.4 335.2 L976.5 332.9 L977.4 331.4 L977.7 319.5 L978.6 328.3 L979.5 319.5 L980.1 331.4 L980.7 367.9 L981.5 401.5 L982.6 396.9 L983.5 400.7 L984.2 367.9 L985.0 344.3 L985.6 367.9 L986.1 400.7 L987.6 398.4 L988.4 367.9 L988.8 350.4 L989.4 383.2 L989.9 401.5 L991.1 398.1 L992.6 399.6 L993.7 404.5 L994.4 405.3 L995.1 383.2 L995.5 354.2 L996.0 375.6 L996.7 398.4 L998.3 397.6 L999.3 395.4 L999.9 367.9 L1000.5 344.3 L1001.5 346.6 L1002.1 355.8 L1002.7 365.7 L1003.3 357.3 L1003.9 367.9 L1004.5 400.2 L1005.1 367.9 L1005.7 354.2 L1006.9 350.9 L1008.2 355.8 L1009.4 359.6 L1010.9 358.0 L1012.0 355.4 L1013.0 356.1 L1014.2 353.5 L1015.5 354.5 L1017.0 352.4 L1018.5 351.5 L1020.0 349.7 L1021.6 348.9 L1022.6 346.9 L1024.0 347.4" fill="none" stroke="#d8d010" stroke-width="1.1" stroke-linejoin="round"/>
<path d="M419.0 448.59H1024M419.0 463.21H1024M419.0 477.53H1024M419.0 491.70H1024M419.0 506.17H1024M419.0 520.64H1024M419.0 534.81H1024M456.40 433.35V549.90M493.50 433.35V549.90M530.30 433.35V549.90M567.30 433.35V549.90M604.60 433.35V549.90M641.50 433.35V549.90M677.50 433.35V549.90M714.60 433.35V549.90M751.60 433.35V549.90M788.60 433.35V549.90M824.40 433.35V549.90M861.60 433.35V549.90M898.90 433.35V549.90M935.80 433.35V549.90M972.70 433.35V549.90M1009.70 433.35V549.90" stroke="#4f4f4f" stroke-width="1" fill="none"/>
<path d="M421.9 502.36H429.0" stroke="#00d8d8" stroke-width="1.1"/>
<path d="M434.8 494.29H442.7" stroke="#008686" stroke-width="1.1"/>
<path d="M447.0 493.38H478.7" stroke="#00d8d8" stroke-width="1.1"/>
<path d="M505.8 481.49H508.2" stroke="#00d8d8" stroke-width="1.1"/>
<path d="M512.8 481.95H523.5" stroke="#008686" stroke-width="1.1"/>
<path d="M528.0 481.95H548.3" stroke="#008686" stroke-width="1.1"/>
<path d="M554.4 481.95H557.9" stroke="#008686" stroke-width="1.1"/>
<path d="M562.8 481.95H571.0" stroke="#008686" stroke-width="1.1"/>
<path d="M565.0 481.95H581.5" stroke="#008686" stroke-width="1.1"/>
<path d="M598.2 463.06H601.3" stroke="#008686" stroke-width="1.1"/>
<path d="M586.0 494.14H591.7" stroke="#008686" stroke-width="1.1"/>
<path d="M613.8 493.38H617.3" stroke="#00d8d8" stroke-width="1.1"/>
<path d="M619.8 502.36H626.9" stroke="#00d8d8" stroke-width="1.1"/>
<path d="M634.3 502.36H663.3" stroke="#00d8d8" stroke-width="1.1"/>
<path d="M679.0 494.14H683.5" stroke="#008686" stroke-width="1.1"/>
<path d="M688.1 474.48H691.9" stroke="#00d8d8" stroke-width="1.1"/>
<path d="M705.2 520.49H707.1" stroke="#00d8d8" stroke-width="1.1"/>
<path d="M712.2 520.49H721.0" stroke="#00d8d8" stroke-width="1.1"/>
<path d="M715.0 520.49H725.4" stroke="#00d8d8" stroke-width="1.1"/>
<path d="M727.2 515.92H732.8" stroke="#008686" stroke-width="1.1"/>
<path d="M737.9 530.39H745.8" stroke="#00d8d8" stroke-width="1.1"/>
<path d="M749.7 530.39H754.9" stroke="#00d8d8" stroke-width="1.1"/>
<path d="M761.0 511.50H764.8" stroke="#00d8d8" stroke-width="1.1"/>
<path d="M770.9 511.50H772.4" stroke="#00a8a8" stroke-width="1.1"/>
<path d="M780.1 536.34H783.6" stroke="#00d8d8" stroke-width="1.1"/>
<path d="M786.3 525.21H793.2" stroke="#008686" stroke-width="1.1"/>
<path d="M795.4 525.21H800.8" stroke="#008686" stroke-width="1.1"/>
<path d="M802.6 515.92H803.8" stroke="#008686" stroke-width="1.1"/>
<path d="M806.4 509.83H809.1" stroke="#008686" stroke-width="1.1"/>
<path d="M817.1 516.38H819.1" stroke="#00a8a8" stroke-width="1.1"/>
<path d="M820.9 520.49H825.0" stroke="#00d8d8" stroke-width="1.1"/>
<path d="M830.8 485.00H834.1" stroke="#008686" stroke-width="1.1"/>
<path d="M848.0 492.31H850.1" stroke="#00a8a8" stroke-width="1.1"/>
<path d="M853.0 502.36H854.9" stroke="#00a8a8" stroke-width="1.1"/>
<path d="M860.9 509.37H863.5" stroke="#00a8a8" stroke-width="1.1"/>
<path d="M867.8 515.46H871.0" stroke="#00d8d8" stroke-width="1.1"/>
<path d="M868.0 515.46H871.0" stroke="#00d8d8" stroke-width="1.1"/>
<path d="M873.8 509.83H882.2" stroke="#008686" stroke-width="1.1"/>
<path d="M885.2 515.92H889.8" stroke="#008686" stroke-width="1.1"/>
<path d="M898.0 503.43H899.7" stroke="#00a8a8" stroke-width="1.1"/>
<path d="M903.0 515.46H907.6" stroke="#00d8d8" stroke-width="1.1"/>
<path d="M912.2 473.42H915.8" stroke="#00d8d8" stroke-width="1.1"/>
<path d="M920.3 474.48H923.6" stroke="#00d8d8" stroke-width="1.1"/>
<path d="M938.8 515.92H940.5" stroke="#008686" stroke-width="1.1"/>
<path d="M945.7 520.49H954.1" stroke="#00d8d8" stroke-width="1.1"/>
<path d="M962.9 509.83H966.3" stroke="#008686" stroke-width="1.1"/>
<path d="M970.8 535.42H979.2" stroke="#00d8d8" stroke-width="1.1"/>
<path d="M989.9 492.31H992.2" stroke="#00a8a8" stroke-width="1.1"/>
<path d="M996.7 483.47H998.3" stroke="#00a8a8" stroke-width="1.1"/>
<path d="M1010.0 493.38H1024.0" stroke="#00d8d8" stroke-width="1.1"/>
<path d="M419.0 567.47H1024M419.0 587.28H1024M419.0 608.61H1024M419.0 630.39H1024M419.0 650.50H1024M456.40 556.05V671.90M493.50 556.05V671.90M530.30 556.05V671.90M567.30 556.05V671.90M604.60 556.05V671.90M641.50 556.05V671.90M677.50 556.05V671.90M714.60 556.05V671.90M751.60 556.05V671.90M788.60 556.05V671.90M824.40 556.05V671.90M861.60 556.05V671.90M898.90 556.05V671.90M935.80 556.05V671.90M972.70 556.05V671.90M1009.70 556.05V671.90" stroke="#4f4f4f" stroke-width="1" fill="none"/>
<path clip-path="url(#c4)" d="M419.1 601.0 L422.6 600.5 L425.7 600.2 L428.7 601.0 L434.8 601.0 L437.9 600.2 L442.4 600.2 L445.5 601.8 L450.0 602.5 L454.6 602.1 L460.7 601.4 L466.8 601.8 L472.9 602.5 L475.9 604.8 L479.0 606.6 L482.0 606.6 L483.6 608.6 L488.1 609.1 L495.7 609.1 L498.0 610.9 L501.8 611.7 L506.4 612.7 L509.5 614.2 L514.0 615.5 L516.3 617.7 L521.6 618.2 L527.7 618.8 L530.8 620.3 L535.4 621.6 L538.4 623.1 L544.5 623.4 L547.5 625.4 L550.6 628.0 L553.6 629.9 L557.4 630.4 L561.2 632.2 L564.3 634.5 L567.3 637.6 L568.0 638.0 L572.6 639.1 L575.7 637.6 L580.2 637.1 L587.9 636.5 L595.5 636.0 L597.0 635.3 L610.7 635.3 L612.2 637.6 L615.3 636.0 L618.3 636.5 L621.4 637.6 L625.9 638.0 L629.0 637.2 L641.2 637.2 L645.7 639.1 L650.3 639.5 L654.9 640.6 L657.9 642.9 L660.2 646.7 L662.5 651.3 L664.8 654.8 L667.1 655.8 L670.1 654.8 L674.7 654.8 L680.8 655.4 L685.4 654.8 L688.4 652.8 L694.5 652.0 L697.5 649.0 L699.1 645.9 L702.1 644.1 L705.2 642.1 L709.7 641.1 L712.8 639.1 L717.3 637.6 L718.0 637.1 L722.6 637.6 L726.4 636.8 L729.5 633.4 L733.3 629.2 L737.9 624.9 L743.2 622.3 L745.5 618.5 L747.8 615.2 L752.3 614.7 L756.1 611.7 L759.9 608.1 L763.0 609.4 L765.3 613.2 L767.1 615.8 L769.8 611.7 L772.9 605.6 L775.9 602.1 L779.0 599.5 L781.3 601.0 L784.3 599.5 L788.1 596.9 L791.2 594.9 L794.2 591.5 L795.7 591.4 L798.0 593.4 L803.4 593.4 L805.6 594.9 L809.5 592.9 L812.5 591.8 L815.5 590.0 L820.1 589.3 L822.4 591.1 L826.2 591.8 L830.8 595.7 L835.4 599.5 L839.9 602.5 L843.0 603.3 L846.0 602.5 L849.1 601.0 L853.6 600.5 L858.2 599.5 L861.2 597.9 L865.1 596.1 L867.3 597.2 L868.9 598.7 L872.6 597.9 L878.7 597.2 L883.2 596.1 L887.8 596.4 L890.9 598.7 L895.4 596.4 L904.6 596.4 L907.6 598.4 L913.7 599.0 L916.8 601.8 L919.8 605.6 L922.8 606.6 L926.7 606.3 L928.9 603.6 L933.5 603.3 L936.6 600.2 L941.1 596.4 L945.7 594.1 L950.3 590.3 L952.6 589.3 L956.4 592.3 L958.6 593.8 L960.9 591.1 L964.0 587.3 L968.5 581.2 L973.1 575.1 L976.9 572.5 L982.3 572.5 L985.3 572.5 L986.8 574.3 L989.9 573.1 L992.9 573.1 L997.5 575.1 L1000.5 577.1 L1005.1 580.7 L1009.7 584.2 L1015.0 587.3 L1018.8 591.8 L1024.0 594.9 L1030 671.9 L419.0 671.9 Z" fill="#7f3f00"/>
<path d="M419.0 671.30H1024" stroke="#d81010" stroke-width="1"/>
<path d="M674.4 655V671.4" stroke="#ff8c00" stroke-width="1.2"/>
<path d="M419.0 687.49H1024M419.0 704.25H1024M419.0 720.40H1024M419.0 736.39H1024M419.0 753.46H1024M419.0 769.45H1024M419.0 785.75H1024M456.40 678.35V794.90M493.50 678.35V794.90M530.30 678.35V794.90M567.30 678.35V794.90M604.60 678.35V794.90M641.50 678.35V794.90M677.50 678.35V794.90M714.60 678.35V794.90M751.60 678.35V794.90M788.60 678.35V794.90M824.40 678.35V794.90M861.60 678.35V794.90M898.90 678.35V794.90M935.80 678.35V794.90M972.70 678.35V794.90M1009.70 678.35V794.90" stroke="#4f4f4f" stroke-width="1" fill="none"/>
<path clip-path="url(#c5)" d="M419.1 735.6 L421.9 737.5 L428.7 737.8 L430.2 736.2 L434.8 735.6 L437.1 734.1 L439.4 734.7 L442.4 732.9 L444.7 733.7 L447.0 732.1 L448.5 731.1 L450.8 735.6 L453.1 735.6 L456.1 735.2 L460.7 735.6 L463.8 735.2 L466.0 734.1 L468.3 735.6 L471.4 734.7 L473.7 736.7 L475.9 742.3 L478.2 740.8 L481.3 742.8 L484.3 744.3 L487.4 745.8 L489.6 744.3 L491.9 746.6 L494.2 748.4 L497.3 745.1 L499.6 743.9 L502.6 743.2 L505.6 740.5 L507.2 746.6 L509.5 752.4 L512.5 748.9 L515.5 747.8 L518.6 743.6 L520.9 746.6 L522.9 748.9 L525.4 745.8 L528.5 743.9 L533.8 743.9 L538.4 743.9 L541.4 742.8 L543.7 742.0 L546.0 744.8 L549.1 745.8 L552.1 745.4 L555.9 749.3 L559.0 750.4 L562.5 751.9 L565.1 749.6 L567.3 745.8 L569.6 750.4 L572.6 757.3 L576.0 761.1 L578.7 757.3 L581.0 751.2 L582.5 743.6 L583.6 732.9 L584.8 725.3 L586.3 722.2 L588.6 723.8 L590.9 729.1 L593.2 733.7 L595.5 730.6 L597.8 729.1 L600.0 729.8 L602.3 728.3 L604.3 728.6 L606.9 732.9 L609.2 735.9 L611.5 734.1 L613.8 735.9 L616.8 736.7 L619.1 735.9 L621.4 738.7 L623.7 734.4 L625.6 732.6 L627.8 733.7 L629.7 733.7 L630.8 723.8 L632.0 722.2 L633.2 724.5 L634.3 735.9 L635.4 746.6 L636.6 746.6 L637.5 736.7 L639.6 735.6 L642.7 735.2 L645.7 735.6 L648.8 735.2 L651.8 737.8 L654.9 739.7 L657.9 741.7 L660.2 740.2 L661.7 739.0 L663.3 743.6 L665.5 754.2 L667.8 766.4 L670.1 781.6 L671.6 790.8 L673.2 793.5 L674.7 787.7 L676.2 769.5 L677.7 751.2 L679.3 742.0 L680.8 735.2 L682.6 732.9 L684.6 735.2 L686.9 737.5 L689.2 739.0 L690.7 735.9 L692.2 731.4 L693.7 729.8 L695.3 725.3 L697.2 723.4 L698.8 727.6 L700.3 732.1 L702.1 728.3 L703.3 717.7 L704.9 705.5 L706.7 697.9 L708.2 704.7 L709.7 712.3 L710.9 714.6 L712.8 710.3 L714.3 716.1 L715.8 725.3 L717.3 731.1 L718.8 728.6 L721.1 727.6 L723.4 724.5 L724.9 722.2 L726.4 729.8 L727.5 740.5 L728.7 745.4 L730.2 743.6 L732.1 745.8 L733.3 739.0 L734.5 720.7 L736.0 705.5 L737.9 697.9 L740.1 700.6 L742.4 702.4 L743.9 710.0 L745.5 719.2 L747.0 724.5 L748.5 717.7 L750.3 700.9 L752.3 688.4 L753.8 693.3 L755.4 710.0 L756.4 728.3 L757.7 737.5 L759.2 720.7 L761.5 708.5 L763.8 701.7 L765.3 707.0 L766.5 728.3 L767.6 748.1 L769.1 769.5 L770.6 786.2 L771.7 792.6 L773.2 781.6 L774.7 760.3 L775.9 742.0 L777.2 713.1 L778.2 687.2 L779.0 679.1 L782.0 679.1 L783.6 687.2 L784.8 713.1 L785.8 735.9 L786.9 740.5 L788.1 735.9 L789.6 723.8 L791.2 716.1 L792.7 711.6 L795.0 715.4 L797.3 712.3 L799.6 711.3 L801.1 714.6 L802.1 723.8 L803.1 739.0 L804.1 755.4 L805.6 755.4 L807.2 744.3 L808.2 742.8 L810.2 749.6 L812.2 755.0 L813.7 743.6 L814.8 732.9 L816.3 717.7 L818.3 709.7 L820.1 714.6 L822.4 720.7 L823.9 732.9 L825.0 738.2 L826.5 739.0 L827.7 749.6 L830.0 758.5 L831.5 751.2 L833.1 742.0 L834.6 746.6 L836.1 757.3 L838.1 766.1 L839.9 767.6 L841.8 766.4 L844.2 767.6 L846.0 763.4 L848.3 751.2 L850.6 739.0 L852.9 731.4 L855.2 723.8 L857.4 719.9 L859.4 726.8 L861.2 728.3 L862.8 722.2 L864.6 718.9 L866.6 722.2 L868.1 726.8 L869.6 721.5 L871.7 728.3 L872.6 740.5 L873.8 754.2 L875.0 761.1 L876.4 754.2 L877.4 742.0 L878.7 732.9 L880.2 729.1 L881.7 727.1 L883.2 727.6 L884.8 729.1 L886.3 728.3 L888.6 728.6 L890.1 723.0 L892.1 719.2 L893.1 722.2 L894.2 732.9 L895.1 748.1 L896.2 764.9 L897.2 767.6 L898.5 760.3 L899.2 742.0 L900.0 728.3 L901.5 723.0 L903.3 724.5 L905.3 724.1 L907.3 724.5 L908.4 732.9 L909.4 740.5 L911.0 749.6 L912.9 756.5 L915.2 751.2 L917.5 745.1 L919.8 740.5 L921.6 742.0 L922.8 748.1 L924.4 763.4 L925.9 775.5 L927.1 779.8 L928.2 772.5 L929.2 757.3 L930.5 735.9 L931.2 723.8 L932.3 721.5 L933.5 728.3 L934.4 733.7 L935.8 720.7 L937.3 709.3 L938.4 709.3 L939.6 723.8 L941.1 732.1 L942.6 723.8 L944.2 713.1 L945.7 706.2 L946.9 704.7 L948.4 710.0 L950.3 716.1 L952.1 722.2 L954.1 720.7 L955.6 714.6 L957.6 708.2 L959.1 709.3 L960.2 723.8 L960.9 743.6 L962.1 766.4 L963.4 775.5 L964.7 766.4 L965.8 748.1 L966.7 728.3 L967.8 697.9 L968.9 684.1 L970.1 680.8 L971.6 684.1 L972.8 687.9 L973.9 681.1 L975.1 679.1 L976.2 679.6 L977.4 688.7 L978.0 702.4 L979.2 713.1 L981.5 713.1 L983.0 723.8 L984.5 731.4 L985.6 739.0 L987.6 743.6 L989.4 746.9 L991.4 745.4 L993.2 742.8 L995.2 745.8 L997.2 742.0 L999.0 742.0 L1000.5 746.6 L1002.8 749.3 L1004.8 751.2 L1006.6 757.3 L1008.9 761.1 L1011.2 758.8 L1014.2 758.0 L1017.3 755.7 L1020.3 754.2 L1022.2 758.0 L1024.0 760.3 L1030 736.4 L419.0 736.4 Z" fill="#ff0000" stroke="#ff0000" stroke-width="0.4"/>
<path d="M833.8 184.2H926.3" stroke="#bdbdbd" stroke-width="1"/>
<path d="M833.8 307.2H926.3" stroke="#bdbdbd" stroke-width="1"/>
<path d="M833.8 429.2H926.3" stroke="#bdbdbd" stroke-width="1"/>
<path d="M833.8 552.2H926.3" stroke="#bdbdbd" stroke-width="1"/>
<path d="M833.8 674.2H926.3" stroke="#bdbdbd" stroke-width="1"/>
<path d="M833.8 797.2H926.3" stroke="#bdbdbd" stroke-width="1"/>
<defs><pattern id="dots" x="892.6" y="801.9" width="3" height="2.95" patternUnits="userSpaceOnUse"><rect width="3" height="3" fill="#aeaeae"/><rect x="0.5" y="0.2" width="1.2" height="1.3" fill="#686868"/><rect x="1.7" y="0.2" width="1.2" height="1.3" fill="#dadada"/></pattern></defs>
<rect x="370" y="800.6" width="654" height="12.1" fill="#b3b3b3"/>
<rect x="370" y="800.6" width="654" height="1.3" fill="#8e8e8e"/>
<rect x="370.6" y="801.9" width="10.7" height="9.6" fill="#c2c2c2"/>
<rect x="381.3" y="801.9" width="1.2" height="9.6" fill="#8c8c8c"/>
<path d="M373 806.2L378.8 803.6V808.8Z" fill="#111"/>
<rect x="892.1" y="801.9" width="132" height="9.6" fill="url(#dots)"/>
<rect x="892.1" y="801.9" width="0.9" height="9.6" fill="#8a8a8a"/>
<rect x="369.9" y="800.6" width="0.8" height="12" fill="#3a3a3a"/>
<rect x="369.9" y="811.4" width="654.1" height="1.3" fill="#262626"/>
<path d="M414 65.30H418.2" stroke="#1a1a1a" stroke-width="1"/>
<text x="412.6" y="69.10" class="tk" text-anchor="end">500</text>
<path d="M414 88.66H418.2" stroke="#1a1a1a" stroke-width="1"/>
<text x="412.6" y="92.46" class="tk" text-anchor="end">400</text>
<path d="M414 112.27H418.2" stroke="#1a1a1a" stroke-width="1"/>
<text x="412.6" y="116.07" class="tk" text-anchor="end">300</text>
<path d="M414 134.82H418.2" stroke="#1a1a1a" stroke-width="1"/>
<text x="412.6" y="138.62" class="tk" text-anchor="end">200</text>
<path d="M414 158.28H418.2" stroke="#1a1a1a" stroke-width="1"/>
<text x="412.6" y="162.08" class="tk" text-anchor="end">100</text>
<path d="M414 181.40H418.2" stroke="#1a1a1a" stroke-width="1"/>
<text x="412.6" y="185.20" class="tk" text-anchor="end">0</text>
<path d="M414 188.90H418.2" stroke="#1a1a1a" stroke-width="1"/>
<text x="412.6" y="192.70" class="tk" text-anchor="end">30</text>
<path d="M414 208.16H418.2" stroke="#1a1a1a" stroke-width="1"/>
<text x="412.6" y="211.96" class="tk" text-anchor="end">25</text>
<path d="M414 227.35H418.2" stroke="#1a1a1a" stroke-width="1"/>
<text x="412.6" y="231.15" class="tk" text-anchor="end">20</text>
<path d="M414 246.39H418.2" stroke="#1a1a1a" stroke-width="1"/>
<text x="412.6" y="250.19" class="tk" text-anchor="end">15</text>
<path d="M414 265.44H418.2" stroke="#1a1a1a" stroke-width="1"/>
<text x="412.6" y="269.24" class="tk" text-anchor="end">10</text>
<path d="M414 285.24H418.2" stroke="#1a1a1a" stroke-width="1"/>
<text x="412.6" y="289.04" class="tk" text-anchor="end">5</text>
<path d="M414 304.40H418.2" stroke="#1a1a1a" stroke-width="1"/>
<text x="412.6" y="308.20" class="tk" text-anchor="end">0</text>
<path d="M414 311.80H418.2" stroke="#1a1a1a" stroke-width="1"/>
<text x="412.6" y="315.60" class="tk" text-anchor="end">110</text>
<path d="M414 330.16H418.2" stroke="#1a1a1a" stroke-width="1"/>
<text x="412.6" y="333.96" class="tk" text-anchor="end">100</text>
<path d="M414 350.42H418.2" stroke="#1a1a1a" stroke-width="1"/>
<text x="412.6" y="354.22" class="tk" text-anchor="end">90</text>
<path d="M414 369.16H418.2" stroke="#1a1a1a" stroke-width="1"/>
<text x="412.6" y="372.96" class="tk" text-anchor="end">80</text>
<path d="M414 388.20H418.2" stroke="#1a1a1a" stroke-width="1"/>
<text x="412.6" y="392.00" class="tk" text-anchor="end">70</text>
<path d="M414 407.24H418.2" stroke="#1a1a1a" stroke-width="1"/>
<text x="412.6" y="411.04" class="tk" text-anchor="end">60</text>
<path d="M414 426.40H418.2" stroke="#1a1a1a" stroke-width="1"/>
<text x="412.6" y="430.20" class="tk" text-anchor="end">50</text>
<path d="M414 433.90H418.2" stroke="#1a1a1a" stroke-width="1"/>
<text x="412.6" y="437.70" class="tk" text-anchor="end">5</text>
<path d="M414 448.59H418.2" stroke="#1a1a1a" stroke-width="1"/>
<text x="412.6" y="452.39" class="tk" text-anchor="end">4.5</text>
<path d="M414 463.21H418.2" stroke="#1a1a1a" stroke-width="1"/>
<text x="412.6" y="467.01" class="tk" text-anchor="end">4</text>
<path d="M414 477.53H418.2" stroke="#1a1a1a" stroke-width="1"/>
<text x="412.6" y="481.33" class="tk" text-anchor="end">3.5</text>
<path d="M414 491.70H418.2" stroke="#1a1a1a" stroke-width="1"/>
<text x="412.6" y="495.50" class="tk" text-anchor="end">3</text>
<path d="M414 506.17H418.2" stroke="#1a1a1a" stroke-width="1"/>
<text x="412.6" y="509.97" class="tk" text-anchor="end">2.5</text>
<path d="M414 520.64H418.2" stroke="#1a1a1a" stroke-width="1"/>
<text x="412.6" y="524.44" class="tk" text-anchor="end">2</text>
<path d="M414 534.81H418.2" stroke="#1a1a1a" stroke-width="1"/>
<text x="412.6" y="538.61" class="tk" text-anchor="end">1.5</text>
<path d="M414 549.40H418.2" stroke="#1a1a1a" stroke-width="1"/>
<text x="412.6" y="553.20" class="tk" text-anchor="end">1</text>
<path d="M414 556.60H418.2" stroke="#1a1a1a" stroke-width="1"/>
<text x="412.6" y="560.40" class="tk" text-anchor="end">190</text>
<path d="M414 567.47H418.2" stroke="#1a1a1a" stroke-width="1"/>
<text x="412.6" y="571.27" class="tk" text-anchor="end">180</text>
<path d="M414 587.28H418.2" stroke="#1a1a1a" stroke-width="1"/>
<text x="412.6" y="591.08" class="tk" text-anchor="end">160</text>
<path d="M414 608.61H418.2" stroke="#1a1a1a" stroke-width="1"/>
<text x="412.6" y="612.41" class="tk" text-anchor="end">140</text>
<path d="M414 630.39H418.2" stroke="#1a1a1a" stroke-width="1"/>
<text x="412.6" y="634.19" class="tk" text-anchor="end">120</text>
<path d="M414 650.50H418.2" stroke="#1a1a1a" stroke-width="1"/>
<text x="412.6" y="654.30" class="tk" text-anchor="end">100</text>
<path d="M414 671.30H418.2" stroke="#1a1a1a" stroke-width="1"/>
<text x="412.6" y="675.10" class="tk" text-anchor="end">80</text>
<path d="M414 678.90H418.2" stroke="#1a1a1a" stroke-width="1"/>
<text x="412.6" y="682.70" class="tk" text-anchor="end">7</text>
<path d="M414 687.49H418.2" stroke="#1a1a1a" stroke-width="1"/>
<path d="M414 704.25H418.2" stroke="#1a1a1a" stroke-width="1"/>
<text x="412.6" y="708.05" class="tk" text-anchor="end">4</text>
<path d="M414 720.40H418.2" stroke="#1a1a1a" stroke-width="1"/>
<text x="412.6" y="724.20" class="tk" text-anchor="end">2</text>
<path d="M414 736.39H418.2" stroke="#1a1a1a" stroke-width="1"/>
<text x="412.6" y="740.19" class="tk" text-anchor="end">0</text>
<path d="M414 753.46H418.2" stroke="#1a1a1a" stroke-width="1"/>
<text x="412.6" y="757.26" class="tk" text-anchor="end">-2</text>
<path d="M414 769.45H418.2" stroke="#1a1a1a" stroke-width="1"/>
<text x="412.6" y="773.25" class="tk" text-anchor="end">-4</text>
<path d="M414 785.75H418.2" stroke="#1a1a1a" stroke-width="1"/>
<path d="M414 794.40H418.2" stroke="#1a1a1a" stroke-width="1"/>
<text x="412.6" y="798.20" class="tk" text-anchor="end">-7</text>
<text class="at" transform="translate(391.0 123.3) rotate(-90)" text-anchor="middle" textLength="47.0" lengthAdjust="spacingAndGlyphs">Power (W)</text>
<text class="at" transform="translate(395.8 246.6) rotate(-90)" text-anchor="middle" textLength="57.2" lengthAdjust="spacingAndGlyphs">Speed (mph)</text>
<text class="at" transform="translate(390.9 369.1) rotate(-90)" text-anchor="middle" textLength="44.4" lengthAdjust="spacingAndGlyphs">Cad (rpm)</text>
<text class="at" transform="translate(393.9 491.6) rotate(-90)" text-anchor="middle" textLength="46.4" lengthAdjust="spacingAndGlyphs">Gear Ratio</text>
<text class="at" transform="translate(390.9 614.0) rotate(-90)" text-anchor="middle" textLength="33.6" lengthAdjust="spacingAndGlyphs">Elev (ft)</text>
<text class="at" transform="translate(397.7 736.6) rotate(-90)" text-anchor="middle" textLength="42.8" lengthAdjust="spacingAndGlyphs">Slope (%)</text>
<text x="421.7" y="196.7" class="lg" fill="#ffffff">Wheel <tspan fill="#0b82c4" style="font-weight:normal;font-size:8.9px">Wind</tspan></text>
<text x="421.7" y="319.0" class="lg" style="font-weight:normal;font-size:9.1px" fill="#e07808">Drafting</text>
<text x="421.7" y="563.8" class="lg" style="font-weight:normal;font-size:8.85px" fill="#e07808">Coasting <tspan fill="#d60000">Braking</tspan></text>
<text x="425.6" y="607.3" class="lg" style="font-weight:normal;font-size:9.05px" fill="#e0e0e0">Start of Out</text>
<path d="M449.5 599V607" stroke="#d0d0d0" stroke-width="0.6"/>
<path d="M419.60 815.8V819.4" stroke="#222" stroke-width="1"/>
<text x="419.60" y="827.9" class="tk" text-anchor="middle">0</text>
<path d="M456.40 815.8V819.4" stroke="#222" stroke-width="1"/>
<text x="456.40" y="827.9" class="tk" text-anchor="middle">0.2</text>
<path d="M493.50 815.8V819.4" stroke="#222" stroke-width="1"/>
<text x="493.50" y="827.9" class="tk" text-anchor="middle">0.4</text>
<path d="M530.30 815.8V819.4" stroke="#222" stroke-width="1"/>
<text x="530.30" y="827.9" class="tk" text-anchor="middle">0.6</text>
<path d="M567.30 815.8V819.4" stroke="#222" stroke-width="1"/>
<text x="567.30" y="827.9" class="tk" text-anchor="middle">0.8</text>
<path d="M604.60 815.8V819.4" stroke="#222" stroke-width="1"/>
<text x="604.60" y="827.9" class="tk" text-anchor="middle">1</text>
<path d="M641.50 815.8V819.4" stroke="#222" stroke-width="1"/>
<text x="641.50" y="827.9" class="tk" text-anchor="middle">1.2</text>
<path d="M677.50 815.8V819.4" stroke="#222" stroke-width="1"/>
<text x="677.50" y="827.9" class="tk" text-anchor="middle">1.4</text>
<path d="M714.60 815.8V819.4" stroke="#222" stroke-width="1"/>
<text x="714.60" y="827.9" class="tk" text-anchor="middle">1.6</text>
<path d="M751.60 815.8V819.4" stroke="#222" stroke-width="1"/>
<text x="751.60" y="827.9" class="tk" text-anchor="middle">1.8</text>
<path d="M788.60 815.8V819.4" stroke="#222" stroke-width="1"/>
<text x="788.60" y="827.9" class="tk" text-anchor="middle">2</text>
<path d="M824.40 815.8V819.4" stroke="#222" stroke-width="1"/>
<text x="824.40" y="827.9" class="tk" text-anchor="middle">2.2</text>
<path d="M861.60 815.8V819.4" stroke="#222" stroke-width="1"/>
<text x="861.60" y="827.9" class="tk" text-anchor="middle">2.4</text>
<path d="M898.90 815.8V819.4" stroke="#222" stroke-width="1"/>
<text x="898.90" y="827.9" class="tk" text-anchor="middle">2.6</text>
<path d="M935.80 815.8V819.4" stroke="#222" stroke-width="1"/>
<text x="935.80" y="827.9" class="tk" text-anchor="middle">2.8</text>
<path d="M972.70 815.8V819.4" stroke="#222" stroke-width="1"/>
<text x="972.70" y="827.9" class="tk" text-anchor="middle">3</text>
<path d="M1009.70 815.8V819.4" stroke="#222" stroke-width="1"/>
<text x="1009.70" y="827.9" class="tk" text-anchor="middle">3.2</text>
<text x="880.5" y="840" class="at" text-anchor="middle">Distance (mi)</text>
</svg>
</div>
</body></html>
